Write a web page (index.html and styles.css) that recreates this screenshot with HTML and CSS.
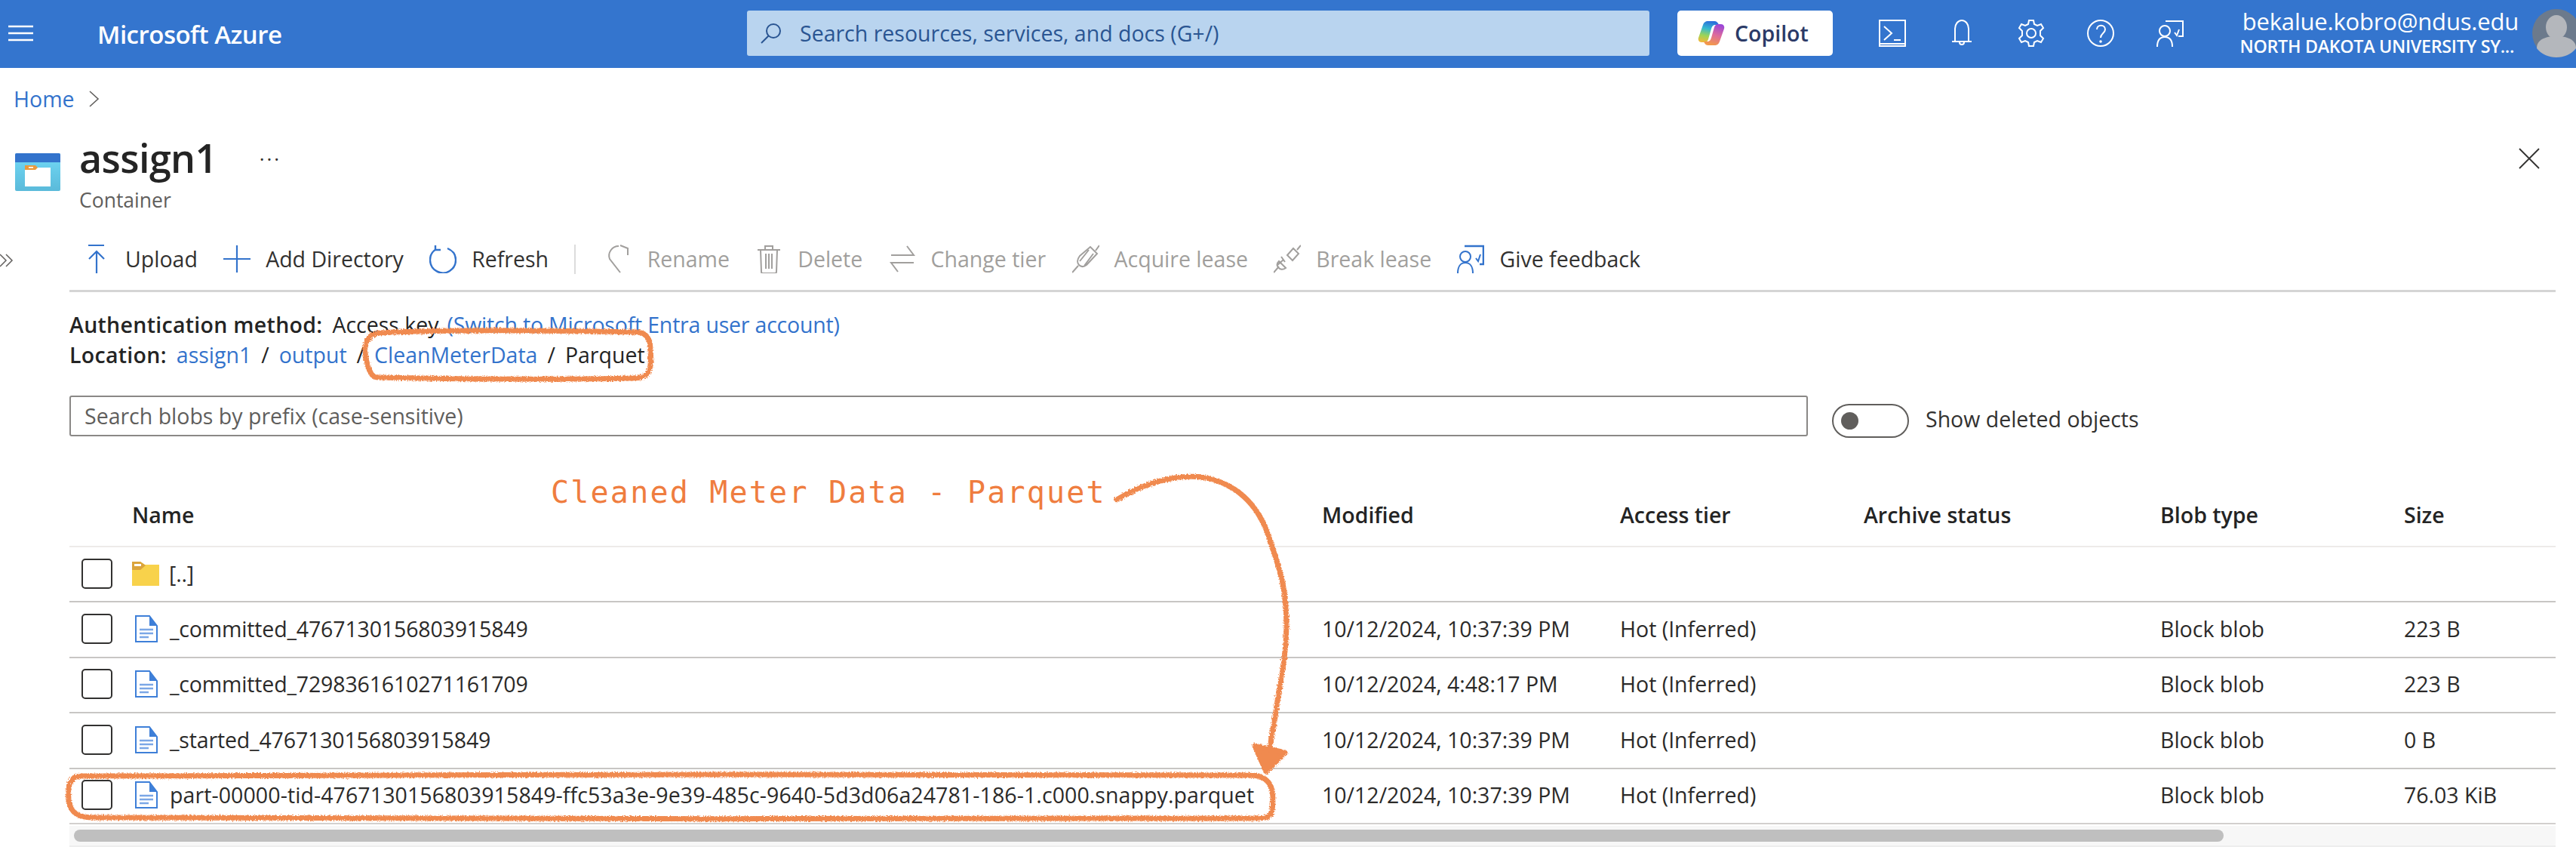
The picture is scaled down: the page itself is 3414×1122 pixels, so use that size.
FILE: index.html
```html
<!DOCTYPE html>
<html lang="en">
<head>
  <meta charset="UTF-8">
  <title>assign1 - Microsoft Azure</title>
  <link rel="stylesheet" href="styles.css">
</head>
<body>

  <!-- TOP BAR -->
  <header class="topbar">
    <svg class="burger" viewBox="0 0 33 22"><path d="M0 2h33M0 11h33M0 20h33" stroke="#fff" stroke-width="2.400"/></svg>
    <div class="brand">Microsoft Azure</div>
    <div class="global-search">
      <svg class="search-icon" viewBox="0 0 28 28" fill="none" stroke="#2a5592" stroke-width="2"><circle cx="17" cy="11" r="9"/><path d="M10.500 17.500 1 27"/></svg>
      <span>Search resources, services, and docs (G+/)</span>
    </div>
    <div class="copilot">
      <svg class="copilot-icon" viewBox="0 0 36 32">
        <defs>
          <linearGradient id="cpA" x1="0.5" y1="0" x2="0.3" y2="1"><stop offset="0" stop-color="#2b6fdc"/><stop offset="0.35" stop-color="#35b9d0"/><stop offset="0.7" stop-color="#9fd455"/><stop offset="1" stop-color="#f0b93c"/></linearGradient>
          <linearGradient id="cpB" x1="0.3" y1="1" x2="0.6" y2="0"><stop offset="0" stop-color="#9a45d8"/><stop offset="0.5" stop-color="#dd6a9c"/><stop offset="1" stop-color="#f39a4a"/></linearGradient>
        </defs>
        <path d="M14 0h8c3 0 5 2 6 5h-4c-4 0-5 2-6 5l-4 14c-1 3-3 4-5 4H5c-3 0-5-3-4-6L7 5c1-3 3-5 7-5z" fill="url(#cpA)"/>
        <path d="M14 0h8c3 0 5 2 6 5h-4c-4 0-5 2-6 5l-4 14c-1 3-3 4-5 4H5c-3 0-5-3-4-6L7 5c1-3 3-5 7-5z" fill="url(#cpB)" transform="rotate(180 18 16)"/>
      </svg>
      <span>Copilot</span>
    </div>
    <div class="top-icons">
      <svg viewBox="0 0 36 36" fill="none" stroke="#fff" stroke-width="2"><path d="M1 1h34v34H1zM1 32h34M7 9l10 9-10 9M20 27h9"/></svg>
      <svg viewBox="0 0 36 36" fill="none" stroke="#fff" stroke-width="2"><path d="M9 29V12c0-6 4-11 9-11s9 5 9 11v17M5 29h26M15 30c0 4 6 4 6 0"/></svg>
      <svg viewBox="0 0 36 36" fill="none" stroke="#fff" stroke-width="2"><circle cx="18" cy="18" r="6"/><path d="M15 1h6l1 5 4 2 5-2 3 5-4 4v6l4 4-3 5-5-2-4 2-1 5h-6l-1-5-4-2-5 2-3-5 4-4v-6l-4-4 3-5 5 2 4-2z"/></svg>
      <svg viewBox="0 0 36 36" fill="none" stroke="#fff" stroke-width="2"><circle cx="18" cy="18" r="17"/><path d="M13 13c0-7 11-7 11 0 0 5-6 5-6 11"/><circle cx="18" cy="29" r="0.800"/></svg>
      <svg viewBox="0 0 36 36" fill="none" stroke="#fff" stroke-width="2"><path d="M12 2h23v20h-6M1 36c0-9 4-13 10-13s10 4 10 13"/><circle cx="11" cy="15" r="7"/><path d="M24 17l3 4 3-8"/></svg>
    </div>
    <div class="user">
      <div class="user-mail">bekalue.kobro@ndus.edu</div>
      <div class="user-org">NORTH DAKOTA UNIVERSITY SY...</div>
    </div>
    <svg class="avatar" viewBox="0 0 64 64">
      <circle cx="32" cy="32" r="32" fill="#6c7a8c"/>
      <ellipse cx="32" cy="24" rx="14" ry="16" fill="#b4b7bc"/>
      <path d="M6 52c0-12 12-16 26-16s26 4 26 16c-6 8-16 12-26 12S12 60 6 52z" fill="#b4b7bc"/>
    </svg>
  </header>

  <nav class="crumbs">
    <a class="link">Home</a>
    <svg class="crumb-arrow" viewBox="0 0 14 22" fill="none" stroke="#605e5c" stroke-width="1.600"><path d="M1 1l11 10L1 21"/></svg>
  </nav>

  <!-- TITLE -->
  <div class="page-head">
    <svg class="container-icon" viewBox="0 0 60 50">
      <defs><linearGradient id="cont" x1="0" y1="0" x2="0" y2="1"><stop offset="0" stop-color="#72d9f6"/><stop offset="1" stop-color="#5abada"/></linearGradient></defs>
      <rect width="60" height="50" rx="2" fill="url(#cont)"/>
      <path d="M0 12V2a2 2 0 0 1 2-2h56a2 2 0 0 1 2 2v10z" fill="#3373cc"/>
      <rect x="13" y="19" width="34" height="25" fill="#fff"/>
      <path d="M13 16h14l3 3-3 3H13z" fill="#ea9a3c"/>
      <rect x="18" y="18" width="6" height="1.600" fill="#fff"/>
    </svg>
    <div class="head-text">
      <div class="head-line">
        <h1>assign1</h1>
        <span class="more">...</span>
      </div>
      <div class="head-sub">Container</div>
    </div>
    <svg class="close" viewBox="0 0 28 28" fill="none" stroke="#323130" stroke-width="1.800"><path d="M1 1l26 26M27 1L1 27"/></svg>
  </div>

  <!-- COMMAND BAR -->
  <div class="tool-row">
    <svg class="expand" viewBox="0 0 18 20" fill="none" stroke="#605e5c" stroke-width="1.500"><path d="M0 2l8 8-8 8M8 2l8 8-8 8"/></svg>
    <div class="toolbar">
      <div class="tool">
        <svg viewBox="0 0 36 38" fill="none" stroke="#3373cc" stroke-width="2.200"><path d="M7 1h21M18 38V9M8 19L18 9l10 10"/></svg>
        <span>Upload</span>
      </div>
      <div class="tool">
        <svg viewBox="0 0 36 38" fill="none" stroke="#3373cc" stroke-width="2.200"><path d="M18 1v36M0 19h36"/></svg>
        <span>Add Directory</span>
      </div>
      <div class="tool">
        <svg viewBox="0 0 36 38" fill="none" stroke="#3373cc" stroke-width="2.400"><path d="M24 5c7 3 11 8 11 15a17 17 0 1 1-26-14M8 1v6h7"/></svg>
        <span>Refresh</span>
      </div>
      <div class="tool-sep"></div>
      <div class="tool off">
        <svg viewBox="0 0 36 38" fill="none" stroke="#a19f9d" stroke-width="2"><path d="M20 37L6 19c-3-8 3-17 12-17M20 1l10 4v9"/></svg>
        <span>Rename</span>
      </div>
      <div class="tool off">
        <svg viewBox="0 0 36 38" fill="none" stroke="#a19f9d" stroke-width="2"><path d="M3 7h30M7 7l1 29c0 1 1 2 2 2h16c1 0 2-1 2-2l1-29M13 7V2h10v5M14 12v20M18 12v20M22 12v20"/></svg>
        <span>Delete</span>
      </div>
      <div class="tool off">
        <svg viewBox="0 0 36 38" fill="none" stroke="#a19f9d" stroke-width="2"><path d="M3 14h30L24 2M33 24H3l9 12"/></svg>
        <span>Change tier</span>
      </div>
      <div class="tool off">
        <svg viewBox="0 0 36 38" fill="none" stroke="#a19f9d" stroke-width="2"><path d="M0 37l8-9M36 1l-5 7M10 15l14-12 9 9-14 15c-4 3-7 3-10 0s-2-8 1-12zM16 28l12-16M10 22l12-15"/></svg>
        <span>Acquire lease</span>
      </div>
      <div class="tool off">
        <svg viewBox="0 0 36 38" fill="none" stroke="#a19f9d" stroke-width="2"><path d="M0 37l7-8M36 1l-5 6M18 14l8-9 7 7-8 9zM7 22l9 9c-4 3-8 2-10-1-2-2-2-5 1-8zM10 16l5 7M4 28l9-8"/></svg>
        <span>Break lease</span>
      </div>
      <div class="tool">
        <svg viewBox="0 0 36 38" fill="none"><path d="M10 2h25v24h-5" stroke="#3373cc" stroke-width="2.600"/><path d="M1 38c0-9 4-14 10-14s10 5 10 14" stroke="#3373cc" stroke-width="2"/><circle cx="11" cy="16" r="7" stroke="#3373cc" stroke-width="2"/><path d="M25 18l3 4 3-9" stroke="#3373cc" stroke-width="2"/></svg>
        <span>Give feedback</span>
      </div>
    </div>
  </div>

  <!-- INFO -->
  <div class="info">
    <div class="info-line"><b>Authentication method:</b><span>Access key</span><a class="link auth-link">(Switch to Microsoft Entra user account)</a></div>
    <div class="info-line"><b>Location:</b><a class="link">assign1</a><i>/</i><a class="link">output</a><i>/</i><a class="link">CleanMeterData</a><i>/</i><span>Parquet</span></div>
  </div>

  <div class="filter-row">
    <div class="prefix-input">Search blobs by prefix (case-sensitive)</div>
    <div class="toggle"><span class="knob"></span></div>
    <span class="toggle-label">Show deleted objects</span>
  </div>

  <!-- BLOB LIST -->
  <div class="grid-wrap">
    <div class="row row-head">
      <div class="cell-name">Name</div>
      <div>Modified</div><div>Access tier</div><div>Archive status</div><div>Blob type</div><div>Size</div>
    </div>
    <div class="row">
      <div class="cell-name"><span class="check"></span>
        <svg class="ico-folder" viewBox="0 0 36 32"><path d="M0 0h11l6 4h19v28H0z" fill="#f8d24b"/><path d="M0 0h11l7 5-7 6H0z" fill="#dba43c"/><rect x="3" y="3" width="9" height="3" fill="#fff"/></svg>
        <span class="name-txt">[..]</span></div>
      <div></div><div></div><div></div><div></div><div></div>
    </div>
    <div class="row">
      <div class="cell-name"><span class="check"></span>
        <svg class="ico-file" viewBox="0 0 30 36"><path d="M1 1h18l10 13v21H1z" fill="#fff" stroke="#3e7fd8" stroke-width="2"/><path d="M19 1l10 13H19z" fill="#3e7fd8"/><path d="M6 19h18M6 24h18M6 29h12" stroke="#7ba7e6" stroke-width="2.600"/></svg>
        <span class="name-txt">_committed_4767130156803915849</span></div>
      <div>10/12/2024, 10:37:39 PM</div><div>Hot (Inferred)</div><div></div><div>Block blob</div><div>223 B</div>
    </div>
    <div class="row">
      <div class="cell-name"><span class="check"></span>
        <svg class="ico-file" viewBox="0 0 30 36"><path d="M1 1h18l10 13v21H1z" fill="#fff" stroke="#3e7fd8" stroke-width="2"/><path d="M19 1l10 13H19z" fill="#3e7fd8"/><path d="M6 19h18M6 24h18M6 29h12" stroke="#7ba7e6" stroke-width="2.600"/></svg>
        <span class="name-txt">_committed_7298361610271161709</span></div>
      <div>10/12/2024, 4:48:17 PM</div><div>Hot (Inferred)</div><div></div><div>Block blob</div><div>223 B</div>
    </div>
    <div class="row">
      <div class="cell-name"><span class="check"></span>
        <svg class="ico-file" viewBox="0 0 30 36"><path d="M1 1h18l10 13v21H1z" fill="#fff" stroke="#3e7fd8" stroke-width="2"/><path d="M19 1l10 13H19z" fill="#3e7fd8"/><path d="M6 19h18M6 24h18M6 29h12" stroke="#7ba7e6" stroke-width="2.600"/></svg>
        <span class="name-txt">_started_4767130156803915849</span></div>
      <div>10/12/2024, 10:37:39 PM</div><div>Hot (Inferred)</div><div></div><div>Block blob</div><div>0 B</div>
    </div>
    <div class="row row-last">
      <div class="cell-name"><span class="check"></span>
        <svg class="ico-file" viewBox="0 0 30 36"><path d="M1 1h18l10 13v21H1z" fill="#fff" stroke="#3e7fd8" stroke-width="2"/><path d="M19 1l10 13H19z" fill="#3e7fd8"/><path d="M6 19h18M6 24h18M6 29h12" stroke="#7ba7e6" stroke-width="2.600"/></svg>
        <span class="name-txt name-long">part-00000-tid-4767130156803915849-ffc53a3e-9e39-485c-9640-5d3d06a24781-186-1.c000.snappy.parquet</span></div>
      <div>10/12/2024, 10:37:39 PM</div><div>Hot (Inferred)</div><div></div><div>Block blob</div><div>76.03 KiB</div>
    </div>
    <div class="hscroll"><div class="thumb"></div></div>
  </div>

  <!-- HAND DRAWN NOTES ON TOP OF THE SCREENSHOT -->
  <div class="note">Cleaned Meter Data - Parquet</div>
  <svg class="marks" viewBox="0 0 3414 1122" fill="none">
    <defs>
      <filter id="rough" x="-5%" y="-5%" width="110%" height="110%">
        <feTurbulence type="fractalNoise" baseFrequency="0.6" numOctaves="2" seed="4"/>
        <feDisplacementMap in="SourceGraphic" scale="5"/>
      </filter>
    </defs>
    <g filter="url(#rough)" stroke="#f08a50" stroke-width="7" stroke-linecap="round" stroke-linejoin="round">
      <path d="M503 441C600 436 760 438 845 440c14 1 17 12 17 24 1 12 0 22-1 24-3 12-14 13-24 13-100 2-240 1-335-1-9 0-11-6-14-14-4-12-5-24-3-30 2-9 8-14 18-15z"/>
      <path d="M112 1028c400-2 1100-3 1545-1 18 0 29 8 30 28 0 10 0 16-2 22-3 7-13 7-25 7-450 1-1140 1-1535-1-19 0-32-4-34-24-1-14 0-20 3-24 3-6 9-7 18-7z"/>
      <path d="M1480 662C1515 640 1560 628 1593 632C1640 640 1668 670 1682 712C1698 760 1705 780 1705 830C1704 880 1696 900 1690 950C1686 970 1684 985 1682 996"/>
      <path d="M1663 988L1703 997L1678 1022Z" fill="#f08a50"/>
    </g>
  </svg>

</body>
</html>
```

FILE: styles.css
```css
html, body { margin: 0; padding: 0; }
body {
  width: 3414px; height: 1122px; overflow: hidden; position: relative;
  font-family: "Open Sans", sans-serif; font-size: 28.500px;
  color: #323130; background: #fff;
}
.link { color: #3373cc; }

/* top bar */
.topbar {
  height: 90px; background: #3475ce; color: #fff;
  display: flex; align-items: center; padding-left: 11px; overflow: hidden;
  box-sizing: border-box;
}
.burger { width: 33px; height: 22px; flex: none; margin-top: -2px; }
.brand { width: 861px; margin-left: 85px; flex: none; font-size: 33px; font-weight: 600; letter-spacing: -0.5px; }
.global-search {
  width: 1196px; height: 60px; flex: none; margin-top: -2px;
  display: flex; align-items: center; background: #b9d4ef; border-radius: 3px;
  color: #2a5592; box-sizing: border-box; padding-left: 18px;
}
.search-icon { width: 28px; height: 28px; flex: none; margin-right: 24px; }
.copilot {
  width: 206px; height: 60px; flex: none; margin: -2px 0 0 37px; box-sizing: border-box;
  display: flex; align-items: center; padding-left: 27px; background: #fff; border-radius: 5px;
  color: #2b3a67; font-weight: 600;
}
.copilot-icon { width: 36px; height: 32px; flex: none; margin-right: 13px; }
.top-icons { display: flex; gap: 56px; margin-left: 61px; flex: none; }
.top-icons svg { width: 36px; height: 36px; margin-top: -2px; }
.user { margin-left: auto; margin-right: 18px; text-align: right; white-space: nowrap; margin-top: -4px; }
.user-mail { line-height: 36px; font-size: 31px; letter-spacing: -0.2px; }
.user-org { line-height: 30px; font-size: 23.300px; font-weight: 600; margin-right: 6px; letter-spacing: -0.3px; }
.avatar { width: 64px; height: 64px; flex: none; margin-top: -2px; margin-right: -6px; }

/* breadcrumb */
.crumbs { height: 82px; display: flex; align-items: center; padding-left: 18px; gap: 19px; }
.crumb-arrow { width: 14px; height: 22px; }

/* title */
.page-head { height: 120px; display: flex; padding-left: 20px; position: relative; }
.container-icon { width: 60px; height: 50px; margin-top: 31px; flex: none; }
.head-text { margin-left: 25px; }
.head-line { height: 72px; display: flex; align-items: center; }
h1 { margin: 0; font-size: 52px; font-weight: 600; color: #242424; letter-spacing: -0.6px; }
.more { margin-left: 56px; font-size: 26px; margin-top: -10px; letter-spacing: 3px; }
.head-sub { line-height: 38px; margin-top: 2px; color: #605e5c; font-size: 26.500px; }
.close { position: absolute; right: 48px; top: 24px; width: 28px; height: 28px; }

/* command bar */
.tool-row { display: flex; align-items: stretch; }
.expand { width: 18px; height: 20px; margin: 43px 74px 0 0; flex: none; }
.toolbar {
  width: 3295px; height: 95px; box-sizing: border-box; padding: 10px 0 0 18px;
  display: flex; align-items: center; gap: 34.300px; border-bottom: 3px solid #d5d5d5;
}
.tool { display: flex; align-items: center; gap: 20px; color: #323130; }
.tool svg { width: 36px; height: 38px; flex: none; }
.tool.off { color: #a19f9d; }
.tool-sep { width: 2px; height: 39px; background: #dcdcdc; margin-right: 4px; }

/* info */
.info { margin: 23px 0 0 92px; }
.info-line { height: 40px; display: flex; align-items: center; gap: 13px; color: #242424; white-space: nowrap; }
.info-line b { font-weight: 600; letter-spacing: 0.300px; }
.info-line i { font-style: normal; }
.auth-link { margin-left: -2px; letter-spacing: -0.200px; }

/* filter */
.filter-row { display: flex; align-items: flex-start; margin: 34px 0 0 92px; }
.prefix-input {
  width: 2304px; height: 54px; box-sizing: border-box; padding-left: 18px;
  border: 2px solid #8a8886; border-radius: 3px; color: #605e5c;
  display: flex; align-items: center; flex: none;
}
.toggle {
  width: 102px; height: 45px; box-sizing: border-box; margin: 11px 0 0 32px; flex: none;
  border: 2px solid #605e5c; border-radius: 23px; display: flex; align-items: center; padding-left: 10px;
}
.knob { width: 23px; height: 23px; border-radius: 50%; background: #605e5c; }
.toggle-label { margin: 11px 0 0 22px; line-height: 40px; }

/* blob list */
.grid-wrap { margin: 62px 0 0 92px; width: 3295px; }
.row {
  display: grid; grid-template-columns: 1660px 395px 323px 393px 323px 201px;
  align-items: center; height: 73.400px; box-sizing: border-box; padding-bottom: 2px;
  border-bottom: 2px solid #c8c6c4; white-space: nowrap; color: #2b2a29;
}
.row-head { height: 83px; font-weight: 600; border-bottom-color: #edebe9; color: #242424; }
.row-head .cell-name { padding-left: 83px; }
.row-last { border-bottom-color: #d2d0ce; }
.cell-name { display: flex; align-items: center; padding-left: 16px; }
.check {
  width: 41px; height: 40px; box-sizing: border-box; flex: none;
  border: 2.500px solid #323130; border-radius: 5px; margin-right: 26px;
}
.ico-folder { width: 36px; height: 32px; flex: none; margin-right: 13px; }
.ico-file { width: 30px; height: 36px; flex: none; margin: 0 16px 0 4px; }
.name-txt { letter-spacing: -0.150px; }
.name-long { letter-spacing: 0.090px; }
.hscroll {
  margin-top: 2px; height: 26px; background: #f7f7f7; box-sizing: content-box;
  border-bottom: 2px solid #eee; padding-left: 6px; display: flex; align-items: center;
}
.thumb { width: 2849px; height: 16px; border-radius: 8px; background: #bfbfbf; }

/* annotation */
.note {
  position: absolute; left: 730px; top: 626px; line-height: 52px; white-space: nowrap;
  font-family: "DejaVu Sans Mono", monospace; font-size: 40px; letter-spacing: 2.200px; color: #ef7d3f;
}
.marks { position: absolute; left: 0; top: 0; width: 3414px; height: 1122px; pointer-events: none; }
```
